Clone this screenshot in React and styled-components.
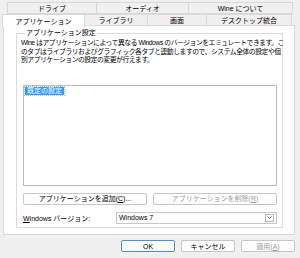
import styled, { createGlobalStyle } from "styled-components";

const GlobalStyle = createGlobalStyle`
  html, body {
    margin: 0;
    padding: 0;
    background: #f0f0f0;
  }
  body {
    font-family: "Liberation Sans", "Noto Sans CJK JP", sans-serif;
    font-size: 7px;
    color: #000;
  }
`;

const Window = styled.div`
  width: 300px;
  height: 258px;
  box-sizing: border-box;
  padding: 2px 5px 0 3px;
  display: flex;
  flex-direction: column;
  overflow: hidden;
`;

const TabRow = styled.div`
  display: flex;
  height: 12px;
  padding-left: ${(p) => p.indent || 0}px;
`;

const Tab = styled.div`
  width: ${(p) => p.w}px;
  flex: none;
  box-sizing: border-box;
  display: flex;
  align-items: center;
  justify-content: center;
  background: ${(p) => (p.active ? "#fff" : "#f0f0f0")};
  border: 1px solid #d9d9d9;
  border-bottom: ${(p) => (p.active ? "none" : "1px solid #d9d9d9")};
  margin-left: -1px;
  white-space: nowrap;
  line-height: 1;
  position: relative;
  z-index: ${(p) => (p.active ? 2 : 1)};
  height: ${(p) => (p.active ? 13 : 12)}px;
`;

const Panel = styled.div`
  width: 292px;
  height: 210px;
  margin-top: -1px;
  box-sizing: border-box;
  background: #fff;
  border: 1px solid #d9d9d9;
  padding: 3px 11px 0 12px;
`;

const Group = styled.fieldset`
  margin: 0;
  min-width: 0;
  padding: 0 5px 0 6px;
  height: 199px;
  box-sizing: border-box;
  border: 1px solid #dcdcdc;
  display: flex;
  flex-direction: column;
`;

const Legend = styled.legend`
  padding: 0 1px;
  margin-left: 2px;
  line-height: 8px;
`;

const Desc = styled.div`
  margin-top: 2px;
  margin-left: -2px;
  line-height: 8.5px;
  white-space: nowrap;
  font-size: 6.8px;
  letter-spacing: -0.45px;
`;

const List = styled.div`
  margin-top: 20px;
  height: 101px;
  box-sizing: border-box;
  border: 1px solid #bcbcbc;
  padding: 1px;
`;

const Item = styled.span`
  display: inline-block;
  background: #3399ff;
  color: #fff;
  padding: 0 2px;
  line-height: 8px;
  outline: 1px dotted #9cc7f5;
`;

const ButtonRow = styled.div`
  display: flex;
  justify-content: space-between;
  margin-top: 7px;
`;

const Button = styled.button`
  font: inherit;
  width: ${(p) => p.w}px;
  height: 12px;
  padding: 0;
  box-sizing: border-box;
  background: #fdfdfd;
  border: 1px solid ${(p) => (p.primary ? "#4a90d9" : "#c7c7c7")};
  border-radius: 2px;
  color: ${(p) => (p.disabled ? "#a0a0a0" : "#000")};
  line-height: 1;
  display: flex;
  align-items: center;
  justify-content: center;
`;

const VersionRow = styled.div`
  display: flex;
  align-items: center;
  justify-content: space-between;
  margin-top: 7px;
`;

const Combo = styled.div`
  width: 161px;
  height: 12px;
  box-sizing: border-box;
  border: 1px solid #c7c7c7;
  background: #fff;
  display: flex;
  align-items: center;
  justify-content: space-between;
  padding-left: 2px;
`;

const Arrow = styled.span`
  width: 9px;
  height: 8px;
  margin-right: 2px;
  box-sizing: border-box;
  border: 1px solid #b8b8b8;
  display: flex;
  align-items: center;
  justify-content: center;
`;

const Footer = styled.div`
  display: flex;
  justify-content: flex-end;
  gap: 6px;
  margin-top: 5px;
`;

const U = styled.u``;

export default function App() {
  return (
    <>
      <GlobalStyle />
      <Window>
        <TabRow indent={5}>
          <Tab w={90}>ドライブ</Tab>
          <Tab w={93}>オーディオ</Tab>
          <Tab w={105}>Wine について</Tab>
        </TabRow>
        <TabRow>
          <Tab w={83} active>
            アプリケーション
          </Tab>
          <Tab w={64}>ライブラリ</Tab>
          <Tab w={60}>画面</Tab>
          <Tab w={86}>デスクトップ統合</Tab>
        </TabRow>
        <Panel>
          <Group>
            <Legend>アプリケーション設定</Legend>
            <Desc>
              Wine はアプリケーションによって異なる Windows のバージョンをエミュレートできます。こ
              <br />
              のタブはライブラリおよびグラフィック各タブと連動しますので、システム全体の設定や個
              <br />
              別アプリケーションの設定の変更が行えます。
            </Desc>
            <List>
              <Item>既定の設定</Item>
            </List>
            <ButtonRow>
              <Button w={124}>
                アプリケーションを追加(<U>C</U>)...
              </Button>
              <Button w={124} disabled>
                アプリケーションを削除(<U>R</U>)
              </Button>
            </ButtonRow>
            <VersionRow>
              <span>
                <U>W</U>indows バージョン:
              </span>
              <Combo>
                <span>Windows 7</span>
                <Arrow>
                  <svg width="5" height="3" viewBox="0 0 5 3">
                    <path d="M0.5 0.5 L2.5 2.5 L4.5 0.5" fill="none" stroke="#444" strokeWidth="0.8" />
                  </svg>
                </Arrow>
              </Combo>
            </VersionRow>
          </Group>
        </Panel>
        <Footer>
          <Button w={54} primary>
            OK
          </Button>
          <Button w={54}>キャンセル</Button>
          <Button w={54} disabled>
            適用(<U>A</U>)
          </Button>
        </Footer>
      </Window>
    </>
  );
}
